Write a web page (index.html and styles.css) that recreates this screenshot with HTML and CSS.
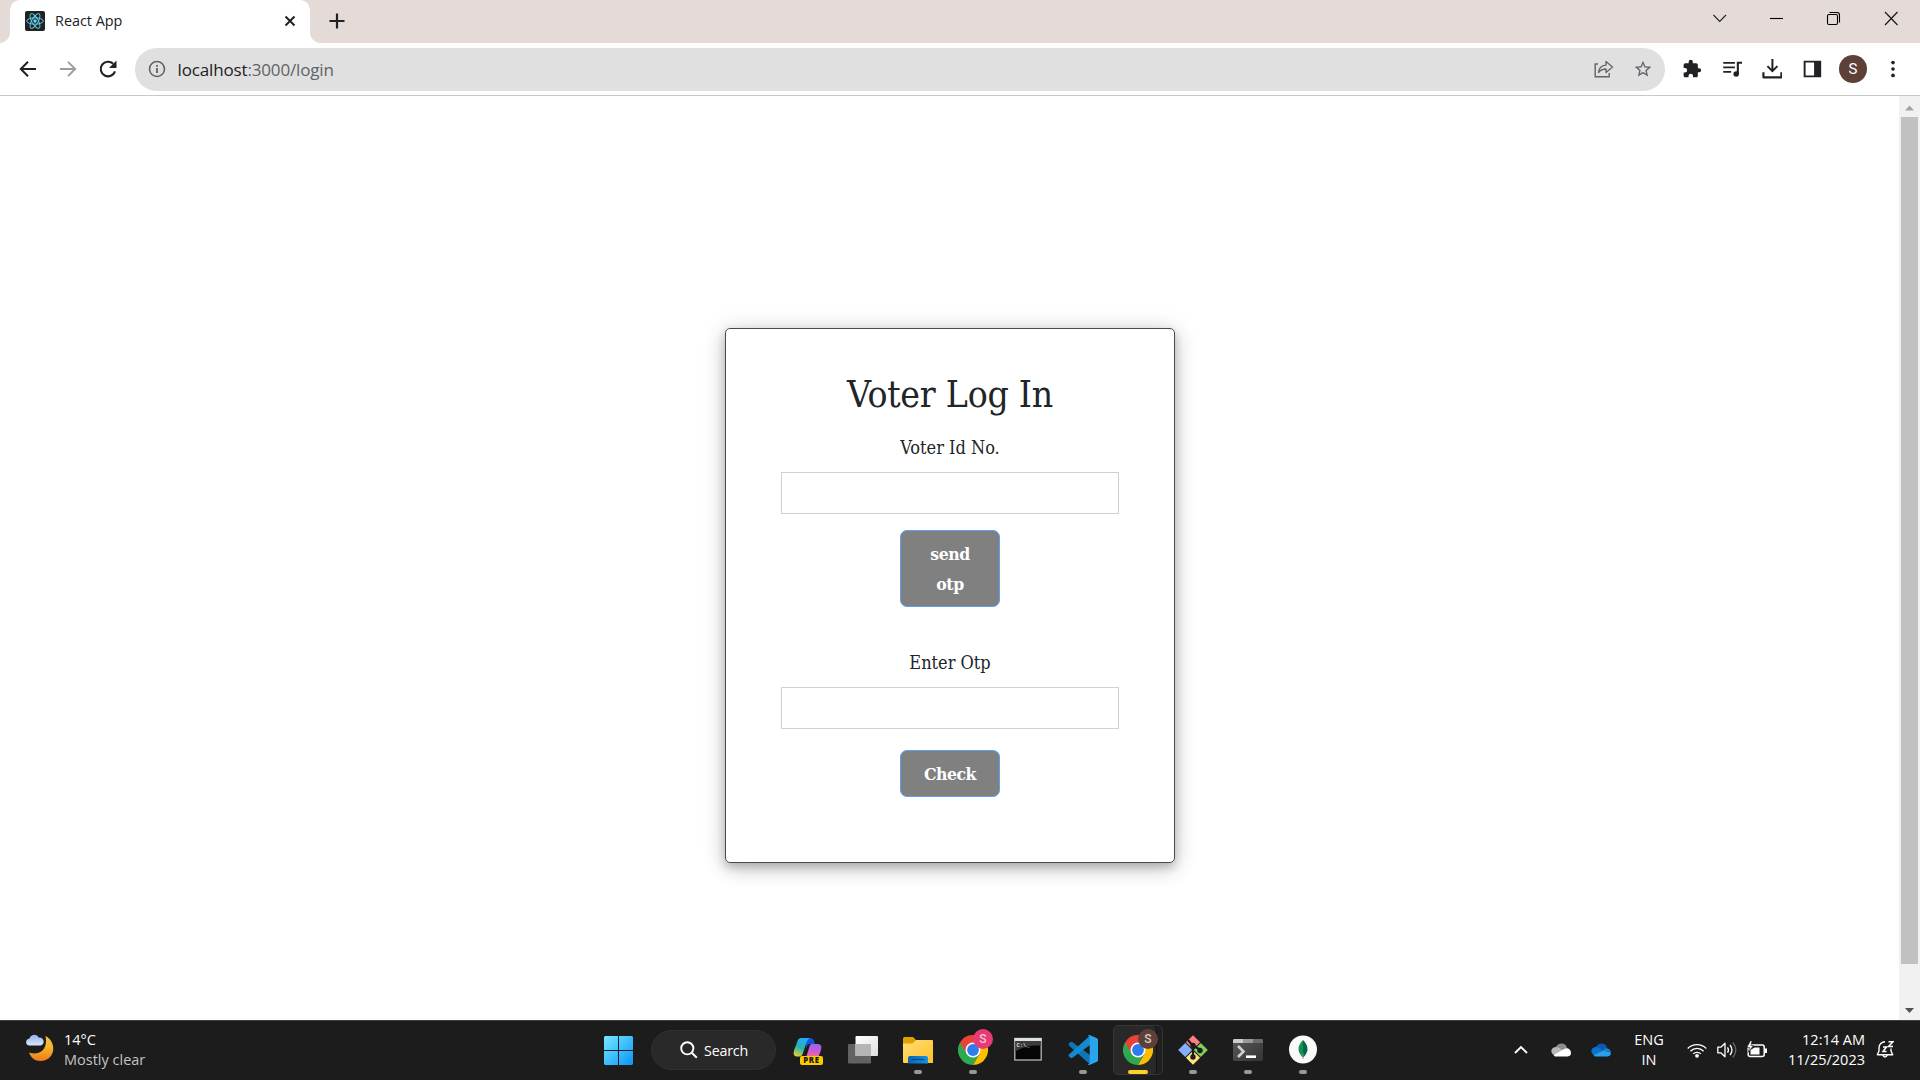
FILE: index.html
```html
<!DOCTYPE html>
<html lang="en">
<head>
<meta charset="utf-8">
<title>React App</title>
<link rel="stylesheet" href="styles.css">
</head>
<body>
<header class="tabstrip">
  <div class="tab">
    <svg class="favicon" width="20" height="20" viewBox="0 0 20 20"><rect width="20" height="20" rx="2" fill="#222"/><g fill="none" stroke="#61dafb" stroke-width=".9"><ellipse cx="10" cy="10" rx="8.3" ry="3.2"/><ellipse cx="10" cy="10" rx="8.3" ry="3.2" transform="rotate(60 10 10)"/><ellipse cx="10" cy="10" rx="8.3" ry="3.2" transform="rotate(120 10 10)"/></g><circle cx="10" cy="10" r="1.7" fill="#61dafb"/></svg>
    <span class="tab-title">React App</span>
    <svg class="tab-close" width="12" height="12" viewBox="0 0 12 12"><path d="M1.500 1.500l9 9M10.500 1.500l-9 9" stroke="#202124" stroke-width="2"/></svg>
  </div>
  <svg class="new-tab" width="16" height="16" viewBox="0 0 16 16"><path d="M8 .5v15M.5 8h15" stroke="#202124" stroke-width="2.200"/></svg>
  <div class="window-controls">
    <svg width="57" height="36" viewBox="0 0 57 36"><path d="M22.500 15l6.200 6.500L35 15" fill="none" stroke="#222" stroke-width="1.100"/></svg>
    <svg width="57" height="36" viewBox="0 0 57 36"><path d="M22 18.500h13" stroke="#000" stroke-width="1.100"/></svg>
    <svg width="57" height="36" viewBox="0 0 57 36"><rect x="22.500" y="14.500" width="10" height="10" rx="1.500" fill="none" stroke="#000" stroke-width="1.100"/><path d="M24.500 12.500h7.500a2.500 2.500 0 0 1 2.500 2.500v7.500" fill="none" stroke="#000" stroke-width="1.100"/></svg>
    <svg width="57" height="36" viewBox="0 0 57 36"><path d="M23 12l12.500 13M35.500 12L23 25" stroke="#111" stroke-width="1.100"/></svg>
  </div>
</header>

<nav class="toolbar">
  <svg class="nav-icon" viewBox="0 0 20 20"><path d="M18 10H3M10 2.800L2.800 10l7.200 7.200" fill="none" stroke="#202124" stroke-width="2"/></svg>
  <svg class="nav-icon" viewBox="0 0 20 20"><path d="M2 10h15M10 2.800l7.200 7.200-7.200 7.200" fill="none" stroke="#9c9c9c" stroke-width="1.900"/></svg>
  <svg class="nav-icon" viewBox="0 0 20 20"><path d="M17 12.300a7.300 7.300 0 1 1-1.800-7.500" fill="none" stroke="#202124" stroke-width="2.100"/><path d="M18.500 1.500v7.500h-7.500z" fill="#202124"/></svg>
  <div class="omnibox">
    <svg width="18" height="18" viewBox="0 0 18 18"><circle cx="9" cy="9" r="7.500" fill="none" stroke="#5f6368" stroke-width="1.600"/><path d="M9 8v5M9 5v1.800" stroke="#5f6368" stroke-width="1.800"/></svg>
    <span class="url"><span class="host">localhost</span>:3000/login</span>
    <svg class="share" width="20" height="18" viewBox="0 0 20 18"><path d="M4 4H1.200v12.800h14V13" fill="none" stroke="#626262" stroke-width="1.400"/><path d="M4.500 12.500c.4-4.500 3-7 7.500-7.300V1.500l6.500 5.500-6.500 5.500V9c-3.500 0-5.500 1-7.500 3.500z" fill="none" stroke="#626262" stroke-width="1.300" stroke-linejoin="round"/></svg>
    <svg class="star" width="20" height="20" viewBox="0 0 24 24"><path fill="#5f6368" d="M22 9.240l-7.190-.62L12 2 9.190 8.630 2 9.240l5.460 4.730L5.820 21 12 17.270 18.180 21l-1.630-7.030L22 9.240zM12 15.400l-3.760 2.270 1-4.280-3.320-2.880 4.380-.38L12 6.100l1.710 4.040 4.380.38-3.320 2.880 1 4.280L12 15.400z"/></svg>
  </div>
  <div class="actions">
    <svg viewBox="0 0 24 24"><path fill="#202124" d="M20.500 11H19V7c0-1.100-.9-2-2-2h-4V3.500a2.500 2.500 0 0 0-5 0V5H4c-1.100 0-2 .9-2 2v3.800h1.500a2.700 2.700 0 0 1 0 5.400H2V20c0 1.100.9 2 2 2h3.800v-1.500a2.700 2.700 0 0 1 5.400 0V22H17c1.100 0 2-.9 2-2v-4h1.500a2.500 2.500 0 0 0 0-5z"/></svg>
    <svg viewBox="0 0 24 24"><path d="M1.500 4.500h14M1.500 10h14M1.500 15.500h9.500" stroke="#202124" stroke-width="2.100"/><path d="M19 18V4.500h5" fill="none" stroke="#202124" stroke-width="2.500"/><circle cx="17" cy="18" r="3.300" fill="#202124"/></svg>
    <svg viewBox="0 0 24 24"><path d="M12.500 0v14M6.500 8.500l6 6 6-6" fill="none" stroke="#202124" stroke-width="2.400"/><path d="M1.700 16v6h21.600v-6" fill="none" stroke="#202124" stroke-width="2.600" stroke-linejoin="round"/></svg>
    <svg viewBox="0 0 24 24"><path fill="#202124" fill-rule="evenodd" d="M2 2h21v20H2zM4.300 4.300v15.400h10.200V4.300z"/></svg>
    <span class="avatar">S</span>
    <svg viewBox="0 0 24 24"><g fill="#202124"><circle cx="10.800" cy="4.300" r="2.200"/><circle cx="10.800" cy="12" r="2.200"/><circle cx="10.800" cy="19.700" r="2.200"/></g></svg>
  </div>
</nav>

<div class="viewport">
  <main class="page">
    <form class="card">
      <h1>Voter Log In</h1>
      <label for="voter">Voter Id No.</label>
      <input id="voter" type="text">
      <button class="send" type="button">send otp</button>
      <label for="otp">Enter Otp</label>
      <input id="otp" type="text">
      <button class="check" type="button">Check</button>
    </form>
  </main>
  <div class="scrollbar">
    <svg width="21" height="21" viewBox="0 0 21 21"><path d="M6 14.500l4.500-5 4.500 5z" fill="#a3a3a3"/></svg>
    <div class="thumb"></div>
    <svg width="21" height="21" viewBox="0 0 21 21"><path d="M6 9l4.500 5L15 9z" fill="#505050"/></svg>
  </div>
</div>

<footer class="taskbar">
  <div class="weather">
    <svg width="30" height="30" viewBox="0 0 30 30"><defs><linearGradient id="moon" x1="0" y1="0" x2="0" y2="1"><stop offset="0" stop-color="#f5c33b"/><stop offset=".45" stop-color="#f5b52c"/><stop offset="1" stop-color="#f07818"/></linearGradient><linearGradient id="cloud" x1="0" y1="0" x2="0" y2="1"><stop offset="0" stop-color="#8fb2ec"/><stop offset="1" stop-color="#dbe7fa"/></linearGradient></defs><path d="M20.500 2c12 6 10 25-5 25-6 0-9.500-3.500-11.500-8.500 9 3 19.500-1.500 16.500-16.500z" fill="url(#moon)"/><path d="M4.500 11.500C0 11.500 0 5 4.500 4.500c1.500-5 8-4.500 9-1 6-.5 7 7 2 8z" fill="url(#cloud)"/></svg>
    <div class="two-lines"><span>14°C</span><span class="dim">Mostly clear</span></div>
  </div>
  <div class="apps">
    <svg class="start" width="29" height="29" viewBox="0 0 29 29"><defs><linearGradient id="win" x1="0" y1="0" x2="1" y2="1" gradientUnits="objectBoundingBox"><stop offset="0" stop-color="#76e8ff"/><stop offset="1" stop-color="#0795fa"/></linearGradient></defs><path d="M1 0h13v14H0V1zM15 0h13l1 1v13H15zM0 15h14v14H1l-1-1zM15 15h14v13l-1 1H15z" fill="url(#win)"/></svg>
    <div class="search"><svg width="18" height="18" viewBox="0 0 18 18"><circle cx="7.300" cy="7.300" r="6.100" fill="none" stroke="#fff" stroke-width="1.900"/><path d="M11.800 11.800l5 5" stroke="#fff" stroke-width="2"/></svg><span>Search</span></div>
    <div class="app">
      <svg width="30" height="30" viewBox="0 0 30 30"><defs><linearGradient id="cp1" x1=".6" y1="0" x2=".2" y2="1"><stop offset="0" stop-color="#27a9ff"/><stop offset=".5" stop-color="#25b2b0"/><stop offset="1" stop-color="#e8cf35"/></linearGradient><linearGradient id="cp2" x1="0" y1="0" x2="0" y2="1"><stop offset="0" stop-color="#8e68f0"/><stop offset=".6" stop-color="#d858ce"/><stop offset="1" stop-color="#ff7a6b"/></linearGradient></defs><path d="M13 3h4c3 0 4 2 5 6h-5c-2 0-3 1-4 4z" fill="#1554d4"/><path d="M9 3h8c-2 1-3 3-4 6l-3 9c-1 3-2 3.500-5 3.500-4 0-5-2-4-6l3-8C5 4 6 3 9 3z" fill="url(#cp1)"/><path d="M19 9h5c4 0 5 2 4 6l-3 8H13l3-10c1-3 1-4 3-4z" fill="url(#cp2)"/><rect x="7" y="21" width="23" height="9" rx="2" fill="#ffc900"/><text x="18.500" y="28.300" text-anchor="middle" font-family="Open Sans" font-weight="800" font-size="7.800" letter-spacing=".7" fill="#1c1c1c">PRE</text></svg>
    </div>
    <div class="app">
      <svg width="30" height="30" viewBox="0 0 30 30"><defs><linearGradient id="tv" x1="0" y1="0" x2="1" y2="1"><stop offset="0" stop-color="#fff"/><stop offset="1" stop-color="#dedede"/></linearGradient></defs><rect x="0" y="9" width="23" height="19.500" rx="1" fill="#626262"/><rect x="7.500" y="1" width="22.500" height="20" rx="1" fill="url(#tv)"/><path d="M7.500 9H23v12H7.500z" fill="#b5b5b5"/></svg>
    </div>
    <div class="app">
      <svg width="30" height="30" viewBox="0 0 30 30"><defs><linearGradient id="fold" x1="0" y1="0" x2="1" y2="1"><stop offset="0" stop-color="#ffdf74"/><stop offset="1" stop-color="#ffc02a"/></linearGradient><linearGradient id="fb" x1="0" y1="0" x2="1" y2="0"><stop offset="0" stop-color="#0a62b4"/><stop offset="1" stop-color="#1493df"/></linearGradient></defs><path d="M0 3.500C0 2.500 1 2 2 2h8l3 3v5H0z" fill="#e0a000"/><path d="M0 8.500h9.500l3.500-3.500h16q1 0 1 1v22H1q-1 0-1-1z" fill="url(#fold)"/><path d="M5 28.500V23q0-2 2-2h16q2 0 2 2v5.500z" fill="url(#fb)"/><path d="M8.500 24.500h13" stroke="#084a8c" stroke-width="1.200"/></svg><i class="mark"></i>
    </div>
    <div class="app">
      <svg width="30" height="30" viewBox="0 0 30 30"><path d="M15 15L2 7.500A15 15 0 0 0 15 30l6.500-11.200z" fill="#2da94f"/><path d="M15 15l6.500 3.800L15 30A15 15 0 0 0 28 7.500H15z" fill="#fdbd00"/><path d="M15 7.500h13A15 15 0 0 0 2 7.500l6.500 11.200z" fill="#ea4335"/><circle cx="15" cy="15" r="7.500" fill="#fff"/><circle cx="15" cy="15" r="5.900" fill="#2c7cf0"/></svg><b class="badge pink">S</b><i class="mark"></i>
    </div>
    <div class="app">
      <svg width="30" height="30" viewBox="0 0 30 30"><rect x="1.800" y="3.500" width="26.400" height="21.500" fill="#050505" stroke="#a6abb0" stroke-width="1.400"/><path d="M1.500 3h27v3h-27z" fill="#dbe2e6"/><path d="M2.500 6h25v4.500Q11 10 2.500 16.500z" fill="#3c3c3c"/><text x="3.500" y="11.500" font-family="Liberation Mono" font-weight="700" font-size="5.500" fill="#ddd">C:\_</text></svg>
    </div>
    <div class="app">
      <svg width="30" height="30" viewBox="0 0 30 30"><path d="M1 10.500q-1-1 0-2l1.500-1.300q1-.7 2 0L22 20v9.500L1.500 11z" fill="#0e75b9"/><path d="M1 19.500q-1 1 0 2l1.500 1.300q1 .7 2 0L22 10V.5L1.500 19z" fill="#1688ce"/><path d="M21.500 0L29 3.300q1 .5 1 1.500v20.400q0 1-1 1.500L21.500 30q-1 .3-1.800-.5 2 0 2-2v-25q0-2-2-2 .8-.8 1.800-.5z" fill="#2ba4ee"/></svg><i class="mark"></i>
    </div>
    <div class="app active">
      <svg width="30" height="30" viewBox="0 0 30 30"><path d="M15 15L2 7.500A15 15 0 0 0 15 30l6.500-11.200z" fill="#2da94f"/><path d="M15 15l6.500 3.800L15 30A15 15 0 0 0 28 7.500H15z" fill="#fdbd00"/><path d="M15 7.500h13A15 15 0 0 0 2 7.500l6.500 11.200z" fill="#ea4335"/><circle cx="15" cy="15" r="7.500" fill="#fff"/><circle cx="15" cy="15" r="5.900" fill="#2c7cf0"/></svg><b class="badge brown">S</b><i class="mark wide"></i>
    </div>
    <div class="app">
      <svg width="30" height="30" viewBox="0 0 30 30"><g transform="rotate(45 15 15)"><rect x="4.500" y="4.500" width="10" height="10" fill="#ff7d7d"/><rect x="15.500" y="4.500" width="10" height="10" fill="#80cf5b"/><rect x="4.500" y="15.500" width="10" height="10" fill="#81b0ff"/><rect x="15.500" y="15.500" width="10" height="10" fill="#ffe27d"/></g><g fill="none" stroke="#1c1c1c" stroke-width="2.200"><path d="M10 5l5 6v13M15 10l7 5"/></g><g fill="#1c1c1c"><circle cx="15" cy="10.500" r="2.700"/><circle cx="22" cy="15.500" r="2.700"/><circle cx="15" cy="22" r="2.700"/></g></svg><i class="mark"></i>
    </div>
    <div class="app">
      <svg width="30" height="30" viewBox="0 0 30 30"><defs><linearGradient id="term" x1="0" y1="0" x2="1" y2="1"><stop offset="0" stop-color="#5a5a5a"/><stop offset="1" stop-color="#333"/></linearGradient></defs><rect x="0" y="4" width="30" height="22" rx="1.500" fill="url(#term)"/><path d="M1 4h9v4H0V5z" fill="#ccc"/><path d="M10 4h10v4H10z" fill="#999"/><path d="M20 4h9l1 1v3H20z" fill="#6c6c6c"/><path d="M5 11l5.500 5.500L5 22" fill="none" stroke="#cfcfcf" stroke-width="2.600"/><path d="M13 21.700h10" stroke="#fff" stroke-width="2.600"/></svg><i class="mark"></i>
    </div>
    <div class="app">
      <svg width="30" height="30" viewBox="0 0 30 30"><circle cx="15" cy="14.500" r="14" fill="#f9f9f9"/><path d="M15 5c-6 6-6 12 0 17.500z" fill="#12924f"/><path d="M15 5c6 6 6 12 0 17.500z" fill="#00684a"/><path d="M15 18v6" stroke="#7aa796" stroke-width=".8"/></svg><i class="mark"></i>
    </div>
  </div>
  <div class="tray">
    <svg width="14" height="14" viewBox="0 0 14 14"><path d="M1 10l6-6 6 6" fill="none" stroke="#fff" stroke-width="1.900"/></svg>
    <svg class="cloud" width="20" height="14" viewBox="0 0 20 14"><path d="M4 6C6-1 15-1 16 5l-6 3z" fill="#8c8c8c"/><path d="M3 12C-1 10-.5 4.500 4.500 4q4 0 7 3.500z" fill="#b8b8b8"/><path d="M2.500 12L13 6c3-2 7 0 7 4q0 3-3.500 3.500H4z" fill="#fff"/></svg>
    <svg class="cloud" width="20" height="14" viewBox="0 0 20 14"><path d="M4 6C6-1 15-1 16 5l-6 3z" fill="#0a58b0"/><path d="M3 12C-1 10-.5 4.500 4.500 4q4 0 7 3.500z" fill="#0d72cf"/><path d="M13 6c3-2 6 0 7 3l-8-1z" fill="#1485db"/><path d="M2.500 12L12 7.500l8 2q0 3.500-3.500 4H4z" fill="#28a3ea"/></svg>
    <div class="two-lines lang"><span>ENG</span><span>IN</span></div>
    <svg class="wifi" width="20" height="16" viewBox="0 0 20 16"><g fill="none" stroke="#fff" stroke-width="1.300"><path d="M.7 6.500a13.200 13.200 0 0 1 18.600 0M3.400 9.200a9.300 9.300 0 0 1 13.200 0M6.100 11.900a5.500 5.500 0 0 1 7.800 0"/></g><circle cx="10" cy="13.800" r="1.900" fill="#fff"/></svg>
    <svg class="sound" width="20" height="18" viewBox="0 0 20 18"><path d="M.8 6.200h3L8 2.200v13.600l-4.200-4h-3z" fill="none" stroke="#fff" stroke-width="1.300" stroke-linejoin="round"/><path d="M10.500 6.300q2 2.700 0 5.400M13 4q4 5 0 10" fill="none" stroke="#fff" stroke-width="1.300"/><path d="M15.800 1.500q6 7.500 0 15" fill="none" stroke="#666" stroke-width="1.300"/></svg>
    <svg class="battery" width="21" height="18" viewBox="0 0 21 18"><rect x="1.200" y="4" width="16" height="11.500" rx="2" fill="none" stroke="#fff" stroke-width="1.500"/><path d="M3.500 13.500V9l4-2.500h5v7z" fill="#fff"/><path d="M18 7.500h2v4.500h-2z" fill="#fff"/><path d="M3.500-.5L0 6.500h2.500L1 11.500l5.500-7H4l1-5z" fill="#fff" stroke="#1c1c1c" stroke-width=".6"/></svg>
    <div class="two-lines clock"><span>12:14 AM</span><span>11/25/2023</span></div>
    <svg class="bell" width="18" height="20" viewBox="0 0 18 20"><path d="M9 2.700a6 6 0 0 0-6 6V12l-1.700 3.700h15.400L15 12V9.500M6.500 16q2.500 4 5 0" fill="none" stroke="#fff" stroke-width="1.400" stroke-linejoin="round"/><path d="M7 8h3.500L7 12.500h3.500M12.500 2.700H17L12.500 7.500H17" fill="none" stroke="#fff" stroke-width="1.500"/></svg>
  </div>
</footer>
</body>
</html>
```
FILE: styles.css
```css
* { box-sizing: border-box; }
body {
  margin: 0;
  width: 1920px;
  height: 1080px;
  overflow: hidden;
  display: flex;
  flex-direction: column;
  background: #fff;
  font-family: "Open Sans", "Noto Sans", sans-serif;
}
svg { display: block; flex: none; }

/* Tab strip */
.tabstrip {
  height: 43px;
  flex: none;
  display: flex;
  align-items: flex-start;
  background: #e4dad8;
  padding-left: 10px;
}
.tab {
  position: relative;
  width: 300px;
  height: 43px;
  display: flex;
  align-items: center;
  padding: 0 14px 1px 15px;
  background: #fff;
  border-radius: 10px 10px 0 0;
}
.tab::before, .tab::after {
  content: "";
  position: absolute;
  bottom: 0;
  width: 10px;
  height: 10px;
}
.tab::before { left: -10px; background: radial-gradient(circle at 0 0, transparent 9.5px, #fff 10px); }
.tab::after { right: -10px; background: radial-gradient(circle at 100% 0, transparent 9.5px, #fff 10px); }
.tab-title { margin: -2px 0 0 10px; font-size: 14.4px; color: #202124; white-space: nowrap; }
.tab-close { margin-left: auto; }
.new-tab { margin: 13px 0 0 19px; }
.window-controls { margin-left: auto; padding-right: 1px; display: flex; }

/* Toolbar */
.toolbar {
  height: 53px;
  flex: none;
  display: flex;
  align-items: center;
  border-bottom: 1px solid #c6c8ca;
  padding-left: 17.5px;
}
.nav-icon { width: 20px; height: 20px; margin: -1px 20px 0 0; }
.omnibox {
  width: 1530px;
  height: 43px;
  margin-left: -2.5px;
  padding: 0 12px 0 13px;
  display: flex;
  align-items: center;
  border-radius: 22px;
  background: #e0e0e0;
}
.url { margin-left: 11.5px; font-size: 17px; letter-spacing: -0.15px; color: #5f6368; white-space: nowrap; }
.host { color: #202124; }
.share { margin-left: auto; }
.star { margin-left: 19px; }
.actions { display: flex; align-items: center; padding: 0 0 1px 17px; gap: 20px; }
.actions svg { width: 20px; height: 20px; }
.avatar {
  width: 28px;
  height: 28px;
  margin: 0 -3px;
  border-radius: 50%;
  background: #5d4037;
  color: #fff;
  font: 15px/28px Roboto, sans-serif;
  text-align: center;
}

/* Browser content */
.viewport { flex: 1; min-height: 0; display: flex; }
.page { flex: 1; display: flex; justify-content: center; align-items: flex-start; padding: 232px 0 0 1px; }
.card {
  width: 450px;
  height: 535px;
  display: flex;
  flex-direction: column;
  align-items: center;
  padding-top: 42px;
  border: 1px solid #4a4a4c;
  border-radius: 5px;
  box-shadow: 0 4px 8px rgba(25, 15, 25, .2), 0 6px 20px rgba(25, 15, 25, .19), 0 0 30px rgba(0, 0, 0, .08);
  color: #212529;
  font-family: "DejaVu Serif Condensed", "DejaVu Serif", serif;
  font-stretch: condensed;
}
.card h1 { margin: 0 0 14px; font-size: 37px; line-height: 48px; font-weight: 400; letter-spacing: -0.25px; white-space: nowrap; }
.card label { font-size: 18px; line-height: 30px; margin-bottom: 9px; }
.card input { width: 338px; height: 42px; padding: 0 12px; border: 1px solid #ced0d2; background: #fff; outline: none; }
.card button {
  width: 100px;
  border: 1px solid #5c9ff5;
  border-radius: 7px;
  background: gray;
  color: #fff;
  font-family: inherit;
  font-stretch: condensed;
  font-size: 17.5px;
  font-weight: 700;
  line-height: 30px;
  letter-spacing: -0.5px;
}
.send { height: 77px; margin: 16px 0 41px; padding: 7px 20px; }
.check { height: 47px; margin-top: 21px; padding: 7px 10px; }

.scrollbar { width: 21px; background: #f1f1f1; display: flex; flex-direction: column; align-items: center; }
.thumb { width: 17px; height: 847px; background: #c1c1c1; margin-bottom: auto; }

/* Taskbar */
.taskbar {
  height: 60px;
  flex: none;
  display: flex;
  align-items: center;
  background: #1c1c1c;
  border-top: 1px solid #3d4040;
  padding-bottom: 1px;
  color: #fff;
  font-size: 14.5px;
}
.weather { width: 604px; padding-left: 24.5px; display: flex; align-items: center; gap: 9.5px; }
.weather svg { margin-top: -2px; }
.two-lines { display: flex; flex-direction: column; line-height: 20px; white-space: nowrap; margin-top: -1px; }
.dim { color: #c4c4c4; }
.apps { display: flex; align-items: center; }
.search {
  width: 125px;
  height: 40px;
  margin: 0 4px 0 18px;
  padding-left: 28px;
  display: flex;
  align-items: center;
  gap: 6px;
  border-radius: 20px;
  border: 1px solid #303030;
  background: #292929;
  font-size: 14.3px;
  letter-spacing: -0.2px;
}
.app { position: relative; width: 55px; height: 50px; display: flex; align-items: center; justify-content: center; }
.active::before {
  content: "";
  position: absolute;
  inset: 0 2px 0 3px;
  border: 1px solid #363636;
  border-radius: 5px;
  background: #292929;
  box-shadow: inset -5px 0 #202020, inset -6px 0 #111;
}
.active svg { position: relative; }
.mark { position: absolute; left: 24px; bottom: 1px; width: 8px; height: 4px; border-radius: 2px; background: #999; }
.mark.wide { left: 18px; width: 20px; background: #ffd02b; }
.badge { position: absolute; left: 28px; top: 4px; width: 20px; height: 20px; border-radius: 50%; text-align: center; font: 500 12px/20px Roboto, sans-serif; }
.pink { background: #e83a76; color: #f9c4d7; }
.brown { background: #5d4037; color: #d5cbc7; }

.tray { margin-left: auto; padding-right: 26px; display: flex; align-items: center; }
.cloud { margin-left: 20px; }
.tray svg:first-child { margin-right: 3px; }
.lang { width: 36px; margin-left: 20px; align-items: center; padding-top: 1px; }
.wifi { margin-left: 20px; }
.sound, .battery { margin-left: 10px; }
.clock { width: 97px; align-items: flex-end; }
.bell { margin: -2px 0 0 11px; }
```
